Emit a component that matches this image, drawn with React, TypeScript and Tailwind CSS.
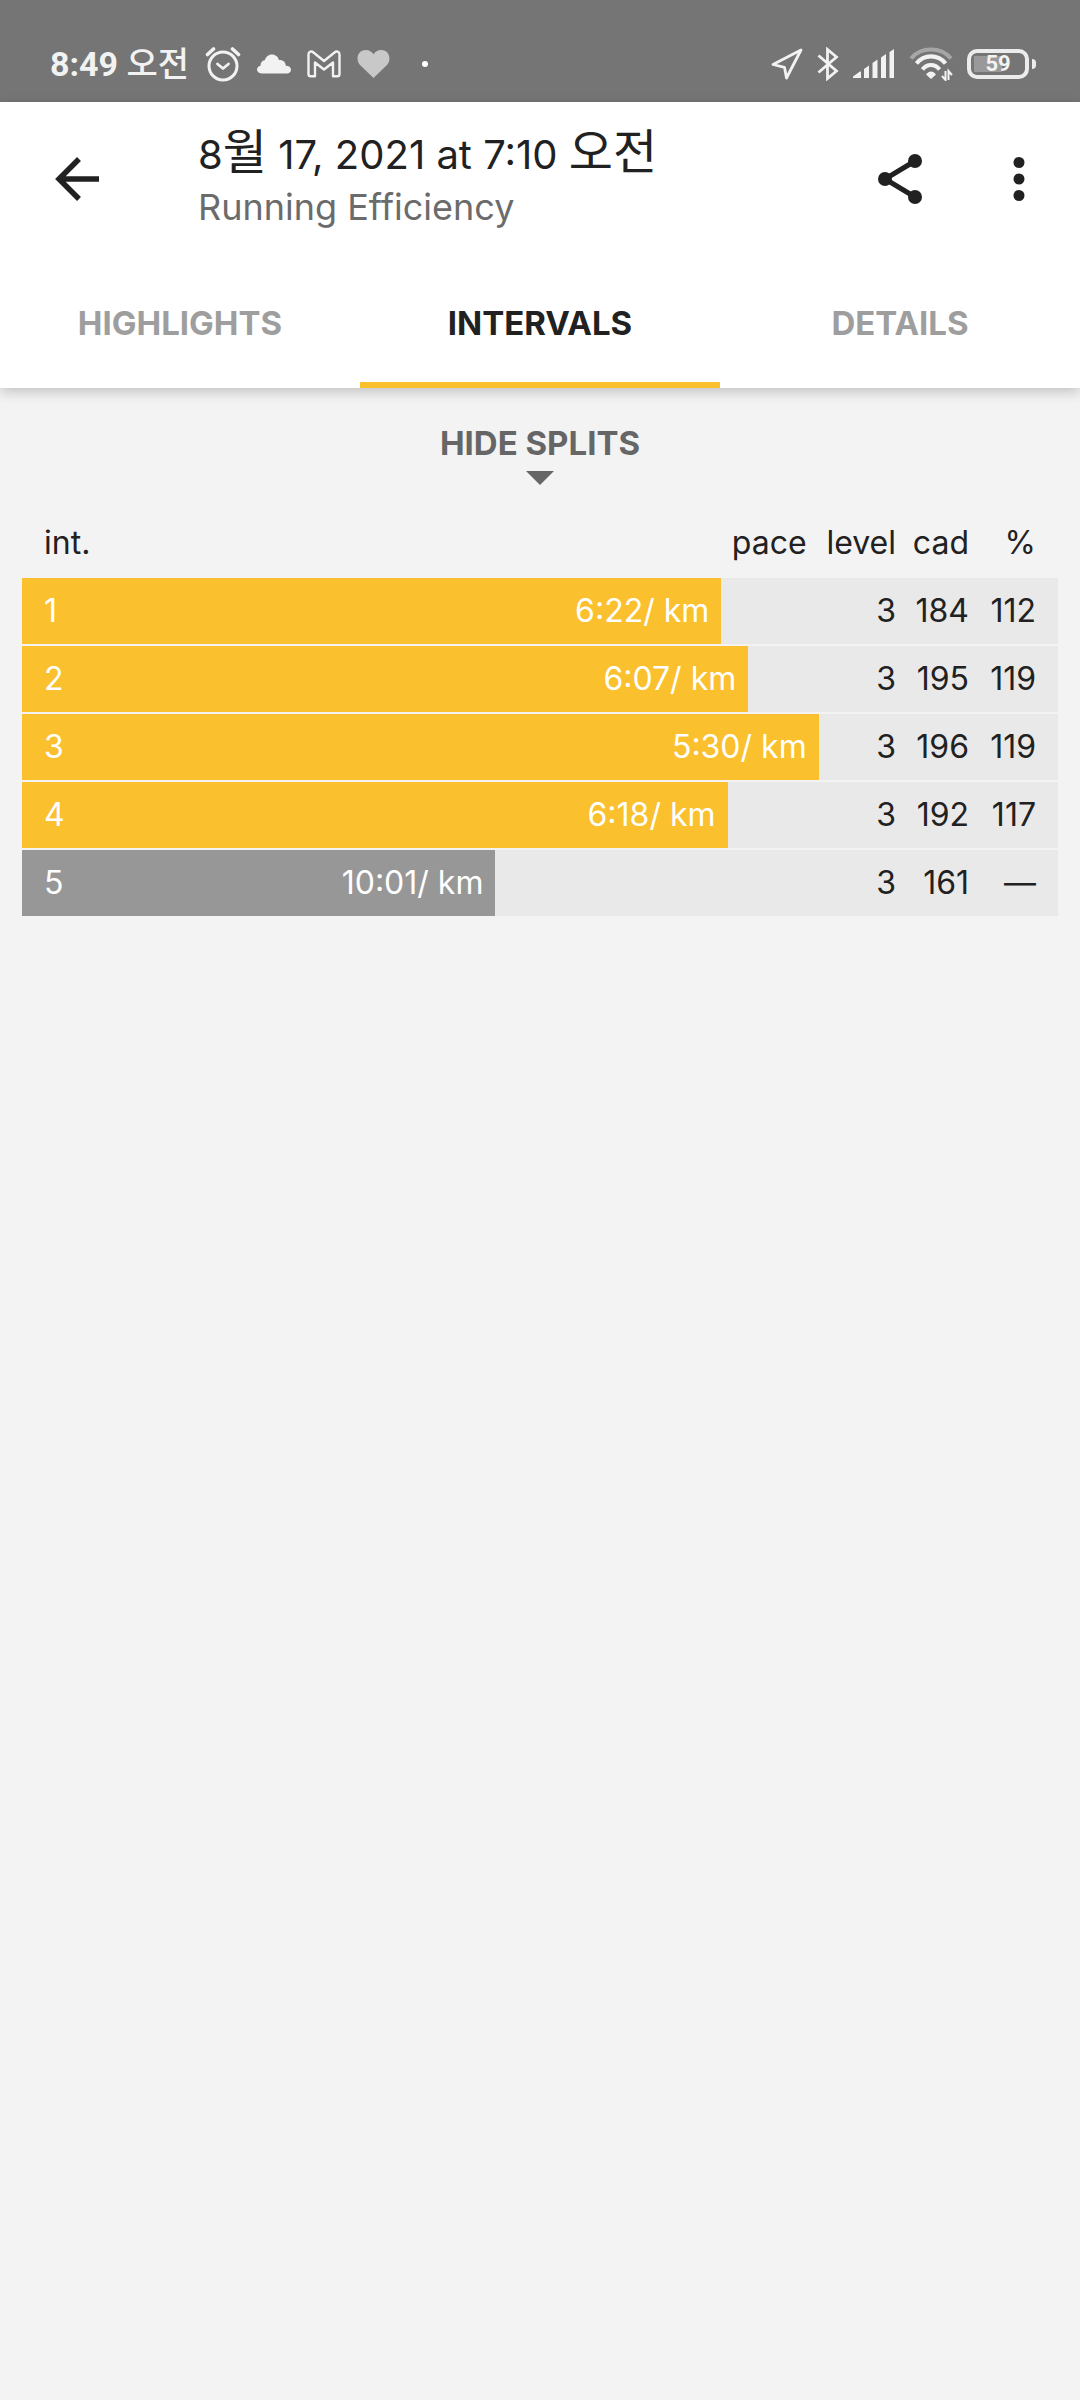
import {useState} from 'react';
import clsx from 'clsx';

const TABS = ['HIGHLIGHTS', 'INTERVALS', 'DETAILS'];

// bar is the share of the row width, in percent
const INTERVALS = [
  { id: 1, pace: '6:22/ km', level: 3, cadence: 184, percent: '112', bar: 67.5, active: true },
  { id: 2, pace: '6:07/ km', level: 3, cadence: 195, percent: '119', bar: 70.1, active: true },
  { id: 3, pace: '5:30/ km', level: 3, cadence: 196, percent: '119', bar: 76.9, active: true },
  { id: 4, pace: '6:18/ km', level: 3, cadence: 192, percent: '117', bar: 68.1, active: true },
  { id: 5, pace: '10:01/ km', level: 3, cadence: 161, percent: '—', bar: 45.7, active: false },
];

const LONGEST_BAR = Math.max(...INTERVALS.map(item => item.bar));

function StatusBar() {
  return (
    <div className="flex h-[102px] items-center justify-between bg-[#757575] pt-[26px] pr-[44px] pl-[50px] font-['Roboto','Noto_Sans_CJK_KR',sans-serif] text-[#f2f2f2]">
      <div className="flex items-center gap-4">
        <span className="text-[34px] leading-10 font-bold">8:49 <span className="font-medium">오전</span></span>
        {/* alarm */}
        <svg className="size-9" viewBox="0 0 36 36" fill="none" stroke="currentColor" strokeLinecap="round" strokeLinejoin="round">
          <circle cx="18" cy="20" r="14" strokeWidth="3" />
          <path d="M12.5 18l5.5 4.5 5.5-4.5" strokeWidth="2.8" />
          <path d="M2.5 8.5l6-5.5M33.5 8.5l-6-5.5" strokeWidth="3.6" />
        </svg>
        <svg className="h-5 w-[34px]" viewBox="0 0 34 20" fill="currentColor">
          <path d="M4.5 19.5C1.8 19.5 0 17.8 0 15.6c0-2.1 1.5-3.6 3.5-3.9C3.4 8.8 5 6.6 7.7 6.3 8.8 2.8 11.4.5 15 .5c3.5 0 6 2.2 7 5.6 3.8-.4 6.8 2 6.8 5.7 3 .1 5.2 1.5 5.2 4 0 2.2-1.8 3.7-4.3 3.7z" />
        </svg>
        {/* mail */}
        <svg className="h-7 w-[34px]" viewBox="0 0 34 28" fill="none" stroke="currentColor" strokeWidth="2.4" strokeLinejoin="round">
          <path d="M1.5 4.5C1.5 1.5 4.5.8 6.5 2.5L17 11 27.5 2.5c2-1.7 5-1 5 2V24c0 1.5-.8 2.3-2.2 2.3H26V12.5l-9 7-9-7v13.8H3.7c-1.4 0-2.2-.8-2.2-2.3z" />
        </svg>
        <svg className="h-7 w-[33px] text-[#c8c8c8]" viewBox="0 0 33 28" fill="currentColor">
          <path d="M16.5 28L3 15C-1.5 10.5 0 0 8.8 0c3.5 0 6 1.7 7.7 4.3C18.2 1.7 20.7 0 24.2 0 33 0 34.5 10.5 30 15z" />
        </svg>
        <span className="ml-4 size-[6px] rounded-full bg-white" />
      </div>
      <div className="flex items-center gap-[14px]">
        {/* location */}
        <svg className="size-8" viewBox="0 0 32 32" fill="none" stroke="currentColor" strokeWidth="2.8" strokeLinejoin="round">
          <path d="M30 2L2 16.5l11.5 2.8L15.5 30z" />
        </svg>
        <svg className="h-[34px] w-[22px]" viewBox="0 0 22 34" fill="none" stroke="currentColor" strokeWidth="2.8">
          <path d="M1.5 8.5L19.5 24 10.5 31.5V2.5L19.5 10 1.5 25.5" />
        </svg>
        {/* signal strength */}
        <svg className="h-[30px] w-[42px]" viewBox="0 0 42 30" fill="currentColor">
          <path d="M0 29v-1.5L7 22.5h1V29zM11 20l5-3.5V29h-5zM19.5 14l5-3.5V29h-5zM28 8.5L33 5v24h-5zM36.5 3L41 0v29h-4.5z" />
        </svg>
        {/* wifi */}
        <svg className="h-[34px] w-11" viewBox="0 0 44 34" fill="none" stroke="currentColor">
          <path d="M2 11.5C12-.5 32-.5 42 11.5" strokeWidth="4" stroke="#a6a6a6" />
          <path d="M7.5 16.5C15 7 29 7 36.5 16.5" strokeWidth="4.2" />
          <path d="M13.5 22.5C18 16.5 26 16.5 30.5 22.5" strokeWidth="4.2" />
          <path d="M17 27.5c3-4 7-4 10 0L22 32z" fill="currentColor" stroke="none" />
          <path d="M36.5 24v9l-3.5-4M39.5 33v-9l3.5 4" strokeWidth="2" />
        </svg>
        <div className="flex items-center gap-[3px]">
          <div className="flex h-[30px] w-[62px] items-center rounded-[10px] border-4 border-[#ececec] p-[3px]">
            <div className="flex h-4 w-full items-center justify-center bg-linear-to-r from-[#999] from-59% to-transparent to-59% text-[22px] leading-4 font-bold">59</div>
          </div>
          <span className="h-[10px] w-1 rounded-r-sm bg-[#ececec]" />
        </div>
      </div>
    </div>
  );
}

function AppHeader() {
  return (
    <div className="flex h-[154px] items-center pr-[41px] pl-[50px] text-[#212121]">
      <button aria-label="Back" className="flex size-[54px] items-center justify-center">
        <svg className="size-11" viewBox="0 0 44 44" fill="none" stroke="currentColor" strokeWidth="5.5">
          <path d="M44 22H4M24 2L4 22l20 20" />
        </svg>
      </button>
      <div className="ml-[94px] grow">
        <h1 className="text-[40px] leading-[52px]">
          8<span className="text-[48px]">월</span> 17, 2021 at 7:10 <span className="text-[48px]">오전</span>
        </h1>
        <p className="text-[36px] leading-[52px] text-[#6b6b6b]">Running Efficiency</p>
      </div>
      <button aria-label="Share" className="flex size-[54px] items-center justify-center">
        <svg className="h-[50px] w-[46px]" viewBox="0 0 46 50" fill="currentColor">
          <path d="M38 7L8 25l30 18" fill="none" stroke="currentColor" strokeWidth="5" />
          <circle cx="38" cy="7" r="7" />
          <circle cx="8" cy="25" r="7" />
          <circle cx="38" cy="43" r="7" />
        </svg>
      </button>
      <button aria-label="More options" className="ml-[72px] flex h-[54px] w-10 items-center justify-center">
        <svg className="h-11 w-3" viewBox="0 0 12 44" fill="currentColor">
          <circle cx="6" cy="5.5" r="5.5" />
          <circle cx="6" cy="22" r="5.5" />
          <circle cx="6" cy="38.5" r="5.5" />
        </svg>
      </button>
    </div>
  );
}

function IntervalTable() {
  return (
    <table className="block text-[32px] leading-10 text-[#212121]">
      <thead className="block">
        <tr className="flex h-[70px] items-center">
          <th scope="col" className="w-[100px] pl-[22px] text-left font-normal">int.</th>
          <th scope="col" className="pr-3 text-right font-normal" style={{ width: `calc(${LONGEST_BAR}% - 100px)` }}>pace</th>
          <th scope="col" className="ml-auto w-[74px] text-right font-normal">level</th>
          <th scope="col" className="w-[73px] text-right font-normal">cad</th>
          <th scope="col" className="w-[89px] pr-[22px] text-right font-normal">%</th>
        </tr>
      </thead>
      <tbody className="flex flex-col gap-[2px]">
        {INTERVALS.map(item => (
          <tr key={item.id} className="flex h-[66px] items-center bg-[#e9e9e9]">
            <th
              scope="row"
              className={clsx('flex h-full w-[100px] items-center pl-[22px] font-normal text-white', item.active ? 'bg-[#fbc02d]' : 'bg-[#979797]')}
            >
              {item.id}
            </th>
            <td
              className={clsx('flex h-full items-center justify-end pr-3 text-white', item.active ? 'bg-[#fbc02d]' : 'bg-[#979797]')}
              style={{ width: `calc(${item.bar}% - 100px)` }}
            >
              {item.pace}
            </td>
            <td className="ml-auto w-[74px] text-right">{item.level}</td>
            <td className="w-[73px] text-right">{item.cadence}</td>
            <td className="w-[89px] pr-[22px] text-right">{item.percent}</td>
          </tr>
        ))}
      </tbody>
    </table>
  );
}

export default function App() {
  const [activeTab, setActiveTab] = useState('INTERVALS');
  const [showSplits, setShowSplits] = useState(true);

  return (
    <div className="min-h-screen bg-[#f3f3f3] font-['Inter','Noto_Sans_CJK_KR',sans-serif]">
      <StatusBar />
      <header className="bg-white shadow-[0_4px_12px_rgba(0,0,0,0.2)]">
        <AppHeader />
        <nav className="grid h-[132px] grid-cols-3">
          {TABS.map(tab => (
            <button
              key={tab}
              onClick={() => setActiveTab(tab)}
              className={clsx('border-y-[6px] border-t-transparent pt-[2px] text-[33px] leading-10 font-bold', tab === activeTab ? 'border-b-[#fbc02d] text-[#212121]' : 'border-b-transparent text-[#9e9e9e]')}
            >
              {tab}
            </button>
          ))}
        </nav>
      </header>
      <main className="px-[22px] pt-[35px]">
        <button onClick={() => setShowSplits(!showSplits)} className="mx-auto flex flex-col items-center text-[33px] leading-10 font-bold text-[#666]">
          {showSplits ? 'HIDE SPLITS' : 'SHOW SPLITS'}
          <svg className="mt-[7px] mb-[22px] h-4 w-7" viewBox="0 0 28 16" fill="currentColor">
            <path d="M0 1h28L14 15z" />
          </svg>
        </button>
        {showSplits && <IntervalTable />}
      </main>
    </div>
  );
}
